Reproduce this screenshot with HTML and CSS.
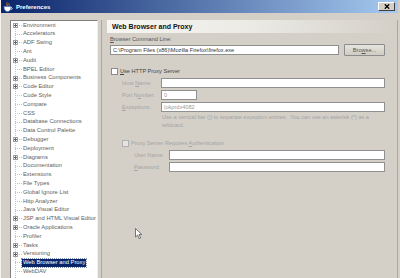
FILE: index.html
```html
<!DOCTYPE html>
<html lang="en">
<head>
  <meta charset="UTF-8">
  <title>Preferences</title>
  <link rel="stylesheet" href="styles.css">
</head>
<body>
  <div class="window">
    <div class="titlebar">
      <svg class="app-icon" width="10" height="10" viewBox="0 0 10 10">
        <path d="M4 0.5 C3 2 5 2.5 4 4" stroke="#e8821e" stroke-width="1" fill="none"/>
        <path d="M6 1 C5.2 2.2 6.8 2.6 6 3.8" stroke="#e8821e" stroke-width="0.8" fill="none"/>
        <path d="M1 4.5 H8 C8 8 6.5 9.5 4.5 9.5 C2.5 9.5 1 8 1 4.5 Z" fill="#fff" stroke="#5a7fc0" stroke-width="0.7"/>
        <path d="M8 5.5 C9.8 5.5 9.8 7.5 7.6 7.5" stroke="#fff" stroke-width="0.8" fill="none"/>
      </svg>
      <span class="caption">Preferences</span>
      <button class="close-btn">
        <svg width="6" height="5" viewBox="0 0 6 5">
          <path d="M0.8 0.3 L5.2 4.7 M5.2 0.3 L0.8 4.7" stroke="#000" stroke-width="1.3"/>
        </svg>
      </button>
    </div>

    <div class="content">
      <div class="tree">
        <div class="node"><span class="twig"><span class="toggle"></span></span><span class="label">Environment</span></div>
        <div class="node"><span class="twig"></span><span class="label">Accelerators</span></div>
        <div class="node"><span class="twig"><span class="toggle"></span></span><span class="label">ADF Swing</span></div>
        <div class="node"><span class="twig"></span><span class="label">Ant</span></div>
        <div class="node"><span class="twig"><span class="toggle"></span></span><span class="label">Audit</span></div>
        <div class="node"><span class="twig"></span><span class="label">BPEL Editor</span></div>
        <div class="node"><span class="twig"><span class="toggle"></span></span><span class="label">Business Components</span></div>
        <div class="node"><span class="twig"><span class="toggle"></span></span><span class="label">Code Editor</span></div>
        <div class="node"><span class="twig"></span><span class="label">Code Style</span></div>
        <div class="node"><span class="twig"></span><span class="label">Compare</span></div>
        <div class="node"><span class="twig"></span><span class="label">CSS</span></div>
        <div class="node"><span class="twig"></span><span class="label">Database Connections</span></div>
        <div class="node"><span class="twig"></span><span class="label">Data Control Palette</span></div>
        <div class="node"><span class="twig"><span class="toggle"></span></span><span class="label">Debugger</span></div>
        <div class="node"><span class="twig"></span><span class="label">Deployment</span></div>
        <div class="node"><span class="twig"><span class="toggle"></span></span><span class="label">Diagrams</span></div>
        <div class="node"><span class="twig"></span><span class="label">Documentation</span></div>
        <div class="node"><span class="twig"></span><span class="label">Extensions</span></div>
        <div class="node"><span class="twig"></span><span class="label">File Types</span></div>
        <div class="node"><span class="twig"></span><span class="label">Global Ignore List</span></div>
        <div class="node"><span class="twig"></span><span class="label">Http Analyzer</span></div>
        <div class="node"><span class="twig"></span><span class="label">Java Visual Editor</span></div>
        <div class="node"><span class="twig"><span class="toggle"></span></span><span class="label">JSP and HTML Visual Editor</span></div>
        <div class="node"><span class="twig"><span class="toggle"></span></span><span class="label">Oracle Applications</span></div>
        <div class="node"><span class="twig"></span><span class="label">Profiler</span></div>
        <div class="node"><span class="twig"><span class="toggle"></span></span><span class="label">Tasks</span></div>
        <div class="node"><span class="twig"><span class="toggle"></span></span><span class="label">Versioning</span></div>
        <div class="node selected"><span class="twig"></span><span class="label">Web Browser and Proxy</span></div>
        <div class="node"><span class="twig"></span><span class="label">WebDAV</span></div>
      </div>

      <div class="panel">
        <div class="panel-header">Web Browser and Proxy</div>
        <div class="form">
          <div class="field-label"><u>B</u>rowser Command Line:</div>
          <div class="command-row">
            <input class="text-input" type="text" value="C:\Program Files (x86)\Mozilla Firefox\firefox.exe">
            <button class="browse-btn">Bro<u>w</u>se...</button>
          </div>

          <label class="check-row">
            <input class="check" type="checkbox">
            <span><u>U</u>se HTTP Proxy Server</span>
          </label>
          <div class="proxy-grid">
            <span class="dim">Host <u>N</u>ame:</span>
            <input class="text-input" type="text" value="">
            <span class="dim">Port N<u>u</u>mber:</span>
            <input class="text-input port" type="text" value="0">
            <span class="dim"><u>E</u>xceptions:</span>
            <input class="text-input dim-value" type="text" value="|okprdx4082">
          </div>
          <div class="hint">Use a vertical bar (|) to separate exception entries.&nbsp; You can use an asterisk (*) as a<br>wildcard.</div>

          <label class="check-row auth-row">
            <input class="check off" type="checkbox">
            <span class="dim">Proxy Server Requires <u>A</u>uthentication</span>
          </label>
          <div class="auth-grid">
            <span class="dim">User Name:</span>
            <input class="text-input" type="text" value="">
            <span class="dim"><u>P</u>assword:</span>
            <input class="text-input" type="password" value="">
          </div>
        </div>
      </div>
    </div>

    <svg class="pointer" width="8" height="12" viewBox="0 0 8 12">
      <path d="M0.5 0.5 L0.5 9 L2.6 7 L4.1 10.6 L5.6 10 L4.1 6.5 L6.8 6.5 Z" fill="#fff" stroke="#555" stroke-width="0.8"/>
    </svg>
  </div>
</body>
</html>
```

FILE: styles.css
```css
body {
  margin: 0;
  background-color: #d4d0c8;
  font-family: "Liberation Sans", Arial, sans-serif;
  font-size: 5.6px;
  color: #2a2a2a;
  overflow: hidden;
}

.window {
  position: relative;
  width: 398px;
  height: 278px;
  overflow: hidden;
  box-sizing: border-box;
  border-left: 1px solid #f4f3ef;
}

/* title bar */

.titlebar {
  height: 13px;
  display: flex;
  align-items: center;
  padding: 0 3px 0 2px;
  background: linear-gradient(to right, #0a246a, #a6caf0);
}

.app-icon {
  flex: none;
}

.caption {
  margin-left: 3px;
  color: #fff;
  font-weight: bold;
  font-size: 6px;
}

.close-btn {
  margin-left: auto;
  width: 17px;
  height: 9px;
  padding: 0;
  display: flex;
  justify-content: center;
  align-items: center;
  background-color: #d4d0c8;
  border: 1px solid;
  border-color: #fff #404040 #404040 #fff;
}

/* navigation tree */

.content {
  display: flex;
  padding: 7px 0 0 9px;
  height: 300px;
}

.tree {
  width: 88px;
  flex: none;
  box-sizing: border-box;
  border: 1px solid;
  border-color: #808080 #f0f0f0 #f0f0f0 #808080;
  background: repeating-linear-gradient(to bottom, #c4c4c4 0 1px, transparent 1px 2px) 4px 4px / 1px 100% no-repeat, #fff;
}

.node {
  height: 8.8px;
  display: flex;
  align-items: center;
}

.twig {
  width: 11px;
  height: 100%;
  flex: none;
  display: flex;
  align-items: center;
  background: repeating-linear-gradient(to right, #c4c4c4 0 1px, transparent 1px 2px) 4px 50% / 7px 1px no-repeat;
}

.toggle {
  width: 5px;
  height: 5px;
  margin-left: 2px;
  box-sizing: border-box;
  border: 1px solid #a0a0a0;
  background:
    linear-gradient(#666, #666) center / 3px 1px no-repeat,
    linear-gradient(#666, #666) center / 1px 3px no-repeat,
    #fff;
}

.label {
  padding: 0 1px;
  line-height: 7.5px;
  font-size: 5.8px;
  white-space: nowrap;
  color: #606060;
}

.node.selected .label {
  background-color: #0a246a;
  color: #fff;
  outline: 1px dotted #8090b0;
}

/* settings panel */

.panel {
  flex: 1;
  margin-left: 3px;
  padding-left: 5px;
  border-left: 1px solid #a8a8a8;
  border-right: 1px solid #a8a8a8;
}

.panel-header {
  height: 13px;
  margin-right: 1px;
  padding-left: 5px;
  display: flex;
  align-items: center;
  font-weight: bold;
  font-size: 7px;
  color: #111;
  background: linear-gradient(to right, #f7f6f2, #ebeae5 50%, #d4d0c8);
}

.form {
  margin-left: 3px;
  width: 275px;
}

.field-label {
  margin-top: 2px;
  line-height: 8px;
  color: #555;
}

.command-row {
  display: flex;
  align-items: center;
  height: 12px;
  margin-top: 1px;
}

.command-row .text-input {
  width: 229px;
  flex: none;
}

.text-input {
  width: 100%;
  height: 10px;
  margin: 0;
  padding: 0 2px;
  box-sizing: border-box;
  border: 1px solid #909090;
  background-color: #fff;
  font-family: inherit;
  font-size: 5.6px;
  color: #333;
  outline: none;
}

.text-input.port {
  width: 36px;
  color: #999;
}

.text-input.dim-value {
  color: #999;
}

.browse-btn {
  width: 41px;
  height: 12px;
  margin-left: 5px;
  padding: 0;
  box-sizing: border-box;
  border: 1px solid #8c8c8c;
  border-radius: 1px;
  background: linear-gradient(#e6e4de, #cfcbc3);
  font-family: inherit;
  font-size: 5.6px;
  color: #555;
}

.check-row {
  display: flex;
  align-items: center;
  height: 8px;
  margin-top: 11px;
  padding-left: 1px;
  color: #444;
}

.check {
  appearance: none;
  width: 7px;
  height: 7px;
  margin: 0 2px 0 0;
  box-sizing: border-box;
  border: 1px solid #8a8a8a;
  background-color: #fff;
}

.check.off {
  border-color: #b0b0b0;
  background-color: #e6e4df;
}

.dim {
  color: #a4a4a4;
  white-space: nowrap;
}

.proxy-grid,
.auth-grid {
  display: grid;
  grid-auto-rows: 10px;
  row-gap: 2px;
  align-items: center;
  margin-top: 3px;
}

.proxy-grid {
  grid-template-columns: 39px 1fr;
  padding-left: 12px;
}

.auth-grid {
  grid-template-columns: 35px 1fr;
  padding-left: 24px;
}

.hint {
  margin-top: 1px;
  padding-left: 52px;
  line-height: 8px;
  color: #a4a4a4;
  white-space: nowrap;
}

.auth-row {
  margin-top: 10px;
  padding-left: 12px;
}

.pointer {
  position: absolute;
  left: 134px;
  top: 228px;
}
```
